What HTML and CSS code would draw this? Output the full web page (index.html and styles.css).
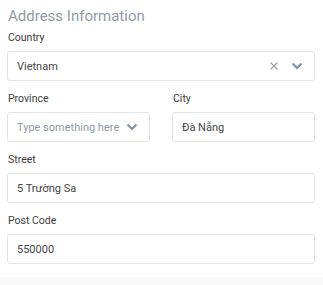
FILE: index.html
```
<html>
<head>
    <meta charset="utf-8"/>
    <title>Address Information</title>
    <link rel="stylesheet" href="styles.css">
</head>
<body>
<div class="panel">
    <div class="title">Address Information</div>

    <div class="field first">
        <div class="label">Country</div>
        <div class="box select">
            <span class="value">Vietnam</span>
            <svg class="clear" width="10" height="10" viewBox="0 0 10 10"><path d="M1.5 1.5 L8.5 8.5 M8.5 1.5 L1.5 8.5" fill="none" stroke="#a0a0a0" stroke-width="1.3"/></svg>
            <svg class="chev" width="12" height="8" viewBox="0 0 12 8"><path d="M1.5 1.5 L6 6 L10.5 1.5" fill="none" stroke="#8394a8" stroke-width="2.2"/></svg>
        </div>
    </div>

    <div class="row">
        <div class="field">
            <div class="label">Province</div>
            <div class="box select">
                <span class="value placeholder">Type something here</span>
                <svg class="chev" width="12" height="8" viewBox="0 0 12 8"><path d="M1.5 1.5 L6 6 L10.5 1.5" fill="none" stroke="#8394a8" stroke-width="2.2"/></svg>
            </div>
        </div>
        <div class="field">
            <div class="label">City</div>
            <div class="box"><span class="value">Đà Nẵng</span></div>
        </div>
    </div>

    <div class="field">
        <div class="label">Street</div>
        <div class="box"><span class="value">5 Trường Sa</span></div>
    </div>

    <div class="field">
        <div class="label">Post Code</div>
        <div class="box"><span class="value">550000</span></div>
    </div>
</div>
<div class="footer"></div>
</body>
</html>
```

FILE: styles.css
```
html, body {
    margin: 0;
    height: 285px;
    overflow: hidden;
}

body {
    background: #ffffff;
    font-family: "Roboto", "Liberation Sans", sans-serif;
    color: #444444;
}

.panel {
    padding: 6px 8px 0 7px;
}

.title {
    font-size: 15px;
    color: #909ba8;
    line-height: 20px;
    padding-left: 1px;
}

.field {
    margin-top: 11px;
}

.field.first {
    margin-top: 5px;
}

.label {
    font-size: 10.5px;
    line-height: 14px;
    color: #3c3c3c;
    margin-bottom: 6px;
    padding-left: 1px;
}

.box {
    height: 28px;
    border: 1px solid #e3e3e3;
    border-radius: 3px;
    display: flex;
    align-items: center;
    padding: 0 11px 0 9px;
    font-size: 11px;
}

.value {
    flex: 1;
    white-space: nowrap;
    overflow: hidden;
}

.placeholder {
    color: #8f9aa7;
}

.clear {
    display: block;
    margin-right: 12px;
}

.chev {
    display: block;
}

.row {
    display: flex;
    gap: 22px;
    margin-top: 11px;
}

.row .field {
    flex: 1;
    margin-top: 0;
}

.footer {
    margin-top: 13px;
    height: 8px;
    background: linear-gradient(#fbfbfb, #f6f6f6);
}
```
